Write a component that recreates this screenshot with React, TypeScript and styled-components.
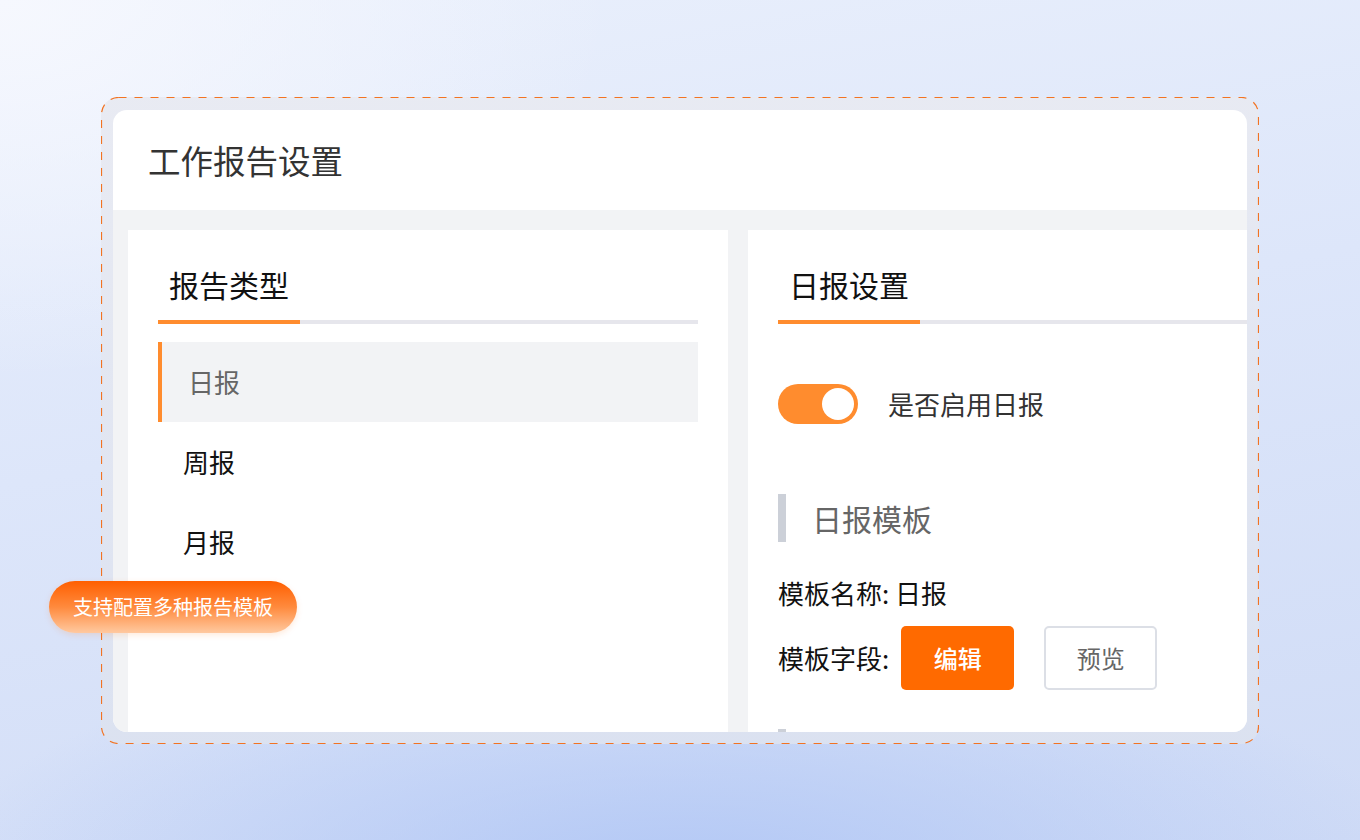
import React, { useState } from "react";
import styled, { createGlobalStyle } from "styled-components";

const FONT = `"Noto Sans CJK SC", "Noto Sans", "Liberation Sans", sans-serif`;

const GlobalStyle = createGlobalStyle`
  html, body {
    margin: 0;
    padding: 0;
  }
  body {
    font-family: ${FONT};
  }
  * {
    box-sizing: border-box;
  }
`;

const reportTypes = ["日报", "周报", "月报"];

export default function App() {
  const [selected, setSelected] = useState(0);
  const [enabled, setEnabled] = useState(true);

  return (
    <>
      <GlobalStyle />
      <Page>
        <Frame>
          <Card>
            <CardHeader>工作报告设置</CardHeader>
            <CardBody>
              <Panel>
                <Tabs>
                  <Tab>报告类型</Tab>
                </Tabs>
                <TypeList>
                  {reportTypes.map((t, i) => (
                    <TypeItem key={t} $active={i === selected} onClick={() => setSelected(i)}>
                      {t}
                    </TypeItem>
                  ))}
                </TypeList>
              </Panel>
              <Panel>
                <Tabs>
                  <Tab>日报设置</Tab>
                </Tabs>
                <SwitchRow>
                  <Switch $on={enabled} onClick={() => setEnabled(!enabled)}>
                    <Knob />
                  </Switch>
                  <SwitchLabel>是否启用日报</SwitchLabel>
                </SwitchRow>
                <SectionTitle>日报模板</SectionTitle>
                <InfoRow>模板名称: 日报</InfoRow>
                <FieldRow>
                  <span>模板字段:</span>
                  <ActionButton $primary>编辑</ActionButton>
                  <ActionButton>预览</ActionButton>
                </FieldRow>
                {/* 下一个分组，只露出标题条 */}
                <SectionTitle $spaced />
              </Panel>
            </CardBody>
          </Card>
          <DashedOutline width="1158" height="647" viewBox="0 0 1158 647">
            <rect
              x="0.5"
              y="0.5"
              width="1157"
              height="646"
              rx="17"
              fill="none"
              stroke="#f27322"
              strokeWidth="1.2"
              strokeDasharray="8 8"
            />
          </DashedOutline>
          <Badge>支持配置多种报告模板</Badge>
        </Frame>
      </Page>
    </>
  );
}

// 样式
const Page = styled.div`
  width: 100vw;
  height: 100vh;
  display: flex;
  align-items: center;
  justify-content: center;
  overflow: hidden;
  background:
    radial-gradient(ellipse 55% 30% at 50% 105%, rgba(176, 198, 245, 0.95) 0%, rgba(176, 198, 245, 0) 100%),
    radial-gradient(ellipse 45% 45% at 0% 0%, #f6f8fe 0%, rgba(246, 248, 254, 0) 100%),
    linear-gradient(170deg, #eaf0fc 0%, #dde6fa 45%, #cfdbf6 100%);
`;

const Frame = styled.div`
  position: relative;
  width: 1158px;
  height: 647px;
  padding: 13px 12px 12px;
  border-radius: 18px;
  background: linear-gradient(180deg, rgba(232, 234, 242, 0.95) 0%, rgba(220, 226, 240, 0.95) 100%);
`;

const DashedOutline = styled.svg`
  position: absolute;
  inset: 0;
  pointer-events: none;
`;

const Card = styled.div`
  width: 1134px;
  height: 622px;
  border-radius: 14px;
  background: #fff;
  overflow: hidden;
  display: flex;
  flex-direction: column;
`;

const CardHeader = styled.div`
  height: 100px;
  flex-shrink: 0;
  display: flex;
  align-items: center;
  padding-left: 35px;
  font-size: 32.5px;
  color: #333;
`;

const CardBody = styled.div`
  flex: 1;
  min-height: 0;
  display: flex;
  gap: 20px;
  padding: 20px 0 0 15px;
  background: #f2f3f5;
  overflow: hidden;
`;

const Panel = styled.div`
  width: 600px;
  flex-shrink: 0;
  padding: 30px 30px 0;
  background: #fff;
`;

const Tabs = styled.div`
  display: flex;
  border-bottom: 4px solid #e6e6ec;
`;

const Tab = styled.div`
  padding: 9px 11px 21px;
  margin-bottom: -4px;
  line-height: 30px;
  font-size: 30px;
  color: #111;
  border-bottom: 4px solid #ff8c2e;
`;

const TypeList = styled.div`
  margin-top: 18px;
  display: flex;
  flex-direction: column;
`;

const TypeItem = styled.div<{ $active?: boolean }>`
  height: 80px;
  display: flex;
  align-items: center;
  padding-left: ${(p) => (p.$active ? "26px" : "25px")};
  font-size: 26px;
  color: ${(p) => (p.$active ? "#666" : "#111")};
  background: ${(p) => (p.$active ? "#f2f3f5" : "transparent")};
  border-left: ${(p) => (p.$active ? "4px solid #ff8c2e" : "none")};
  cursor: pointer;
`;

const SwitchRow = styled.div`
  margin-top: 60px;
  display: flex;
  align-items: center;
  gap: 30px;
`;

const Switch = styled.button<{ $on: boolean }>`
  width: 80px;
  height: 40px;
  padding: 4px;
  border: none;
  border-radius: 20px;
  display: flex;
  justify-content: ${(p) => (p.$on ? "flex-end" : "flex-start")};
  background: ${(p) => (p.$on ? "#ff8c2e" : "#dcdfe6")};
  cursor: pointer;
`;

const Knob = styled.span`
  width: 32px;
  height: 32px;
  border-radius: 50%;
  background: #fff;
`;

const SwitchLabel = styled.span`
  font-size: 26px;
  color: #333;
`;

const SectionTitle = styled.div<{ $spaced?: boolean }>`
  margin-top: ${(p) => (p.$spaced ? "39px" : "70px")};
  height: 48px;
  display: flex;
  align-items: center;
  padding-left: 26px;
  border-left: 8px solid #ccd0d8;
  font-size: 30px;
  color: #666;
`;

const InfoRow = styled.div`
  margin-top: 31px;
  height: 40px;
  display: flex;
  align-items: center;
  font-size: 26px;
  color: #111;
`;

const FieldRow = styled.div`
  margin-top: 13px;
  display: flex;
  align-items: center;
  font-size: 26px;
  color: #111;

  & > span {
    margin-right: 12px;
  }
  & > button + button {
    margin-left: 30px;
  }
`;

const ActionButton = styled.button<{ $primary?: boolean }>`
  width: 113px;
  height: 64px;
  border-radius: 5px;
  font-family: ${FONT};
  font-size: 24px;
  font-weight: ${(p) => (p.$primary ? 500 : 400)};
  color: ${(p) => (p.$primary ? "#fff" : "#666")};
  background: ${(p) => (p.$primary ? "#ff6a00" : "#fff")};
  border: ${(p) => (p.$primary ? "none" : "2px solid #dcdfe6")};
  cursor: pointer;
`;

const Badge = styled.div`
  position: absolute;
  left: -52px;
  top: 484px;
  height: 52px;
  padding: 0 24px;
  border-radius: 26px;
  display: flex;
  align-items: center;
  font-size: 20px;
  color: #fff;
  white-space: nowrap;
  background: linear-gradient(180deg, #ff5f00 0%, #ff8a3d 50%, #ffc9a0 100%);
  box-shadow: 0 2px 6px rgba(255, 106, 0, 0.15);
`;
